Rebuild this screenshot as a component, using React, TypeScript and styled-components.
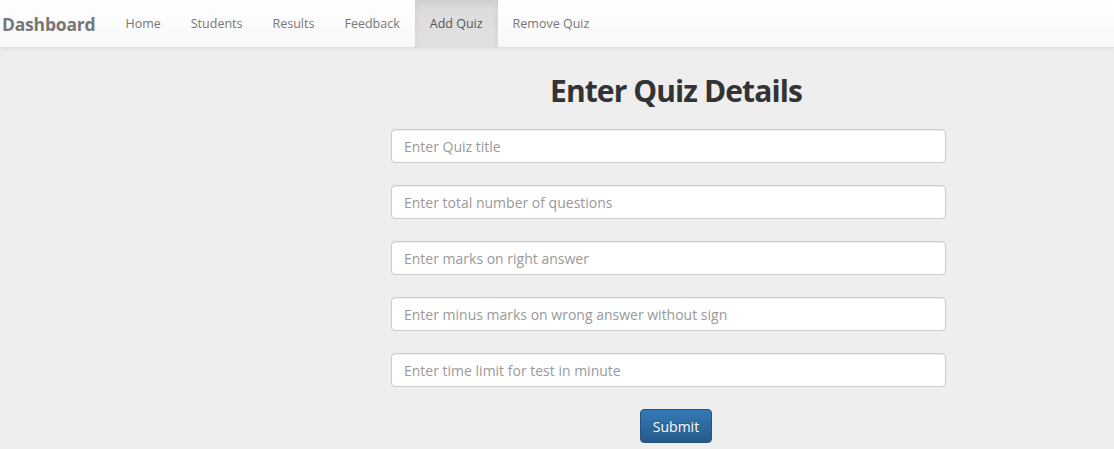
import styled, { createGlobalStyle } from "styled-components";

const GlobalStyle = createGlobalStyle`
  body {
    margin: 0;
    background: #eeeeee;
    font-family: "Open Sans", "Liberation Sans", sans-serif;
    color: #333;
  }
  * { box-sizing: border-box; }
`;

const navItems = ["Home", "Students", "Results", "Feedback", "Add Quiz", "Remove Quiz"];

const fields = [
  "Enter Quiz title",
  "Enter total number of questions",
  "Enter marks on right answer",
  "Enter minus marks on wrong answer without sign",
  "Enter time limit for test in minute",
];

export default function App() {
  return (
    <>
      <GlobalStyle />
      <Navbar>
        <Brand>Dashboard</Brand>
        <NavList>
          {navItems.map((item) => (
            <NavItem key={item} $active={item === "Add Quiz"}>
              {item}
            </NavItem>
          ))}
        </NavList>
      </Navbar>
      <Main>
        <FormColumn>
          <Heading>Enter Quiz Details</Heading>
          {fields.map((f) => (
            <Field key={f} placeholder={f} />
          ))}
          <SubmitButton type="button">Submit</SubmitButton>
        </FormColumn>
      </Main>
    </>
  );
}

const Navbar = styled.nav`
  display: flex;
  align-items: stretch;
  height: 48px;
  background: linear-gradient(to bottom, #ffffff 0%, #f8f8f8 100%);
  border-bottom: 1px solid #e0e0e0;
  box-shadow: 0 1px 5px rgba(0, 0, 0, 0.08);
`;

const Brand = styled.div`
  display: flex;
  align-items: center;
  padding: 0 15px 0 2px;
  font-size: 17.5px;
  font-weight: bold;
  color: #777;
  letter-spacing: -0.2px;
`;

const NavList = styled.div`
  display: flex;
  align-items: stretch;
`;

const NavItem = styled.div<{ $active?: boolean }>`
  display: flex;
  align-items: center;
  padding: 0 15px;
  font-size: 12.5px;
  color: ${(p) => (p.$active ? "#555" : "#777")};
  background: ${(p) =>
    p.$active ? "linear-gradient(to bottom, #dbdbdb 0%, #e2e2e2 100%)" : "transparent"};
  box-shadow: ${(p) => (p.$active ? "inset 0 3px 9px rgba(0,0,0,0.075)" : "none")};
`;

const Main = styled.main`
  padding-left: 391px;
  padding-top: 26px;
`;

const FormColumn = styled.div`
  width: 570px;
  display: flex;
  flex-direction: column;
  align-items: flex-start;
`;

const Heading = styled.h1`
  align-self: center;
  margin: 0 0 21px;
  font-size: 30px;
  font-weight: bold;
  color: #333;
  line-height: 34px;
  letter-spacing: -0.9px;
`;

const Field = styled.input`
  width: 555px;
  height: 34px;
  margin-bottom: 22px;
  padding: 6px 12px;
  font-family: inherit;
  font-size: 14px;
  color: #555;
  background: #fff;
  border: 1px solid #ccc;
  border-radius: 4px;
  box-shadow: inset 0 1px 1px rgba(0, 0, 0, 0.075);
  &::placeholder {
    color: #999;
  }
`;

const SubmitButton = styled.button`
  align-self: center;
  height: 34px;
  width: 72px;
  padding: 6px 0;
  font-family: inherit;
  font-size: 14px;
  color: #fff;
  background: linear-gradient(to bottom, #337ab7 0%, #265a88 100%);
  border: 1px solid #245580;
  border-radius: 4px;
  text-shadow: 0 -1px 0 rgba(0, 0, 0, 0.2);
`;
